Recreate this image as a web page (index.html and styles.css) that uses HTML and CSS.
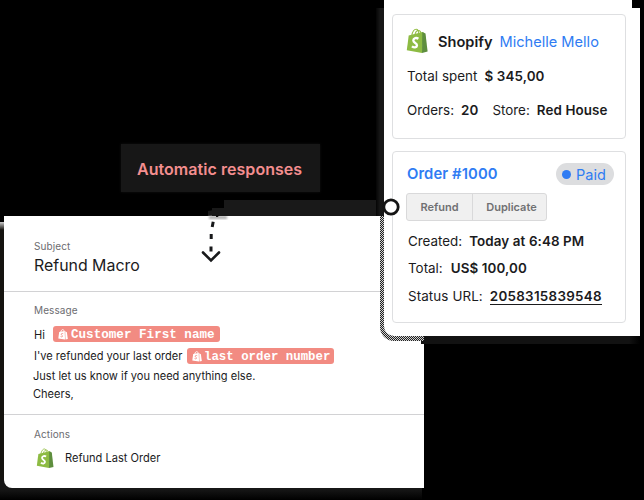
FILE: index.html
```html
<!DOCTYPE html>
<html lang="en">
<head>
<meta charset="utf-8">
<title>Automatic responses</title>
<link rel="stylesheet" href="styles.css">
</head>
<body>
<svg class="defs" width="0" height="0" aria-hidden="true">
  <symbol id="bag" viewBox="0 0 22 25">
    <path d="M5.8 7.5C6.5 3.5 8.5 1.2 10.2 1.2c2 0 2.6 2.8 2.6 5.3M9 6.5C9.600 3.500 11.500 2.300 13 2.500c1.500.3 2 2 2.200 3.500" fill="none" stroke="#95bf47" stroke-width="1.100"/>
    <path d="M2.700 7.600 16.300 4l1.400.4L16 25 .8 22.200z" fill="#8dbb43"/>
    <path d="m16.300 4 3.200 1.600L21.600 23.600 16 25z" fill="#5e8e3e"/>
    <path d="M12.400 10.700C10.500 9.500 7.400 9.900 7.300 12.300c-.1 2.600 4 2.700 3.700 5.200-.3 2.300-3.100 2.300-5.100.8" fill="none" stroke="#fff" stroke-width="2.300"/>
  </symbol>
  <symbol id="bag-mono" viewBox="0 0 10 11">
    <path d="M2.800 3.200C3 1.300 4 .6 4.800.6s1.300.8 1.400 2" fill="none" stroke="#fff" stroke-width=".9"/>
    <path d="M1.200 3 6.700 2.100 7 10.600.3 9.500z" fill="#fff"/>
    <path d="m7.200 2.200 1.700 1 .9 6.700-2.300.7z" fill="#fff"/>
    <path d="M5.200 4.700c-1-.5-2-.2-2 .6 0 .9 1.500 1 1.300 1.900-.1.800-1.100.8-1.900.3" fill="none" stroke="#f28b82" stroke-width=".9"/>
  </symbol>
</svg>
<main class="stage">
  <div class="tag">Automatic responses</div>
  <div class="link-shade"></div>
  <div class="macro-edge"></div>
  <div class="macro-shade"></div>

  <section class="macro">
    <div class="block subject">
      <div class="label">Subject</div>
      <div class="title">Refund Macro</div>
    </div>
    <div class="block message">
      <div class="label">Message</div>
      <div class="line line-hi"><span class="hi">Hi</span><span class="pill pill-name"><svg class="mono-bag"><use href="#bag-mono"/></svg><span>Customer First name</span></span></div>
      <div class="line line-refund"><span class="refunded">I've refunded your last order</span><span class="pill pill-order"><svg class="mono-bag"><use href="#bag-mono"/></svg><span>last order number</span></span></div>
      <div class="line line-know"><span>Just let us know if you need anything else.</span></div>
      <div class="line line-bye"><span>Cheers,</span></div>
    </div>
    <div class="block actions">
      <div class="label">Actions</div>
      <div class="action"><svg class="bag-small"><use href="#bag"/></svg><span>Refund Last Order</span></div>
    </div>
  </section>

  <div class="side-shade"></div>
  <div class="bottom-shade"></div>
  <div class="dither"></div>
  <section class="customer">
    <div class="card summary">
      <div class="row brand"><svg class="bag-large"><use href="#bag"/></svg><b>Shopify</b><span class="name">Michelle Mello</span></div>
      <div class="row spent"><span>Total spent</span><b>$ 345,00</b></div>
      <div class="row orders"><span>Orders:</span><b>20</b><span class="store">Store:</span><b class="house">Red House</b></div>
    </div>
    <div class="card order">
      <div class="row head"><b class="number">Order #1000</b><span class="paid"><i></i><span>Paid</span></span></div>
      <div class="buttons"><span class="btn refund">Refund</span><span class="btn duplicate">Duplicate</span></div>
      <div class="row created"><span>Created:</span><b>Today at 6:48 PM</b></div>
      <div class="row total"><span>Total:</span><b>US$ 100,00</b></div>
      <div class="row status"><span>Status URL:</span><b class="url">2058315839548</b></div>
    </div>
  </section>
  <div class="notch"></div>

  <svg class="connector" width="220" height="80" viewBox="0 0 220 80">
    <defs><filter id="soft"><feGaussianBlur stdDeviation="1.200"/></filter></defs>
    <path d="M9 26h18v3H9z" fill="#aaa" filter="url(#soft)"/>
    <path d="M12 18h18v8H12z" fill="#191919"/>
    <path d="M16 25h3l-1 2h-2z" fill="#111"/>
    <path d="M13.200 31.800 12.200 37M11.200 44v5M11 56.500v5" fill="none" stroke="#18191b" stroke-width="3"/>
    <path d="m3 62.500 8 8 8-8" fill="none" stroke="#18191b" stroke-width="2.600" stroke-linecap="round" stroke-linejoin="miter"/>
    <circle cx="191" cy="17" r="7.200" fill="#fff" stroke="#141414" stroke-width="2.800"/>
  </svg>
</main>
</body>
</html>
```
FILE: styles.css
```css
* { box-sizing: border-box; }
body { margin: 0; background: #000; font-family: Inter, "Liberation Sans", sans-serif; color: #1b1b1d; }
.defs { position: absolute; }
.stage { position: relative; width: 644px; height: 500px; overflow: hidden; background: #000; }
.row, .line, .action, .label, .title { display: flex; align-items: center; white-space: nowrap; }
b { font-weight: 600; }

.tag { position: absolute; left: 121px; top: 144px; width: 199px; height: 48px; padding-left: 16px; background: #171717; box-shadow: 0 0 3px #111; color: #f48e8f; font-size: 16px; font-weight: 600; letter-spacing: .05px; line-height: 50px; white-space: nowrap; }
.link-shade { position: absolute; left: 208px; top: 200px; width: 176px; height: 16px; background: #191919; clip-path: polygon(16px 0, 100% 0, 100% 100%, 0 100%, 0 11px, 16px 8px); }
.macro-edge { position: absolute; left: 0; top: 222px; width: 4px; height: 278px; background: linear-gradient(#ccc, #15130f 8px); }
.macro-shade { position: absolute; left: 0; top: 480px; width: 422px; height: 20px; background: linear-gradient(#171717 45%, #000); }

.macro { position: absolute; left: 4px; top: 216px; width: 420px; height: 272px; background: #fff; border-radius: 0 0 0 8px; }
.block { padding-left: 30px; }
.subject { height: 76px; padding-top: 22px; border-bottom: 1px solid #d2d2d4; }
.message { height: 123px; padding-top: 10px; border-bottom: 1px solid #d2d2d4; }
.actions { padding-top: 11px; }
.label { height: 16px; font-size: 10px; color: #6c6c70; letter-spacing: .1px; }
.title { height: 22px; font-size: 15.900px; }
.line { font-size: 11.070px; }
.line-hi { height: 18px; margin-top: 7px; }
.hi { width: 19px; padding-top: 1px; }
.pill { display: flex; align-items: center; height: 16px; padding-left: 5px; border-radius: 3px; background: #f28b82; color: #fff; font: bold 12.600px "Liberation Mono", monospace; }
.pill span { padding-top: 2px; }
.pill-name { width: 167px; }
.pill-order { width: 147px; margin-left: 5px; font-size: 12.400px; }
.mono-bag { width: 10px; height: 11px; margin-right: 3px; flex: none; }
.pill-order .mono-bag { margin-right: 2px; }
.line-refund { height: 18px; margin-top: 4px; }
.refunded { width: 148px; }
.line-know { height: 18px; margin-top: 2px; margin-left: -1px; }
.line-bye { height: 18px; margin-left: -1px; }
.action { height: 22px; margin-top: 5px; padding-left: 2px; font-size: 11.070px; }
.bag-small { width: 18px; height: 20px; margin-right: 11px; }

.side-shade { position: absolute; left: 376px; top: 8px; width: 8px; height: 208px; background: linear-gradient(90deg, #050505, #171717 50%); }
.bottom-shade { position: absolute; left: 421px; top: 336px; width: 219px; height: 8px; background: linear-gradient(90deg, #121212 95%, #000); }
.dither { position: absolute; left: 380px; top: 216px; width: 44px; height: 125px; border-radius: 0 0 0 14px; background: repeating-conic-gradient(#222 0 25%, #d0d0d0 0 50%) 0 0 / 2px 2px; }
.customer { position: absolute; left: 384px; top: 0; width: 256px; height: 336px; padding: 14px 14px 0 8px; background: #fff; border-radius: 0 0 0 10px; }
.notch { position: absolute; left: 632px; top: 0; width: 12px; height: 8px; background: #000; }
.card { border: 1px solid #dedfe1; border-radius: 4px; font-size: 13.400px; }
.card .row:not(.brand) b { letter-spacing: .1px; }
.summary { height: 125px; padding: 13px 0 0 13px; }
.order { height: 172px; margin-top: 12px; padding: 10px 0 0 13px; }
.brand { height: 28px; font-size: 14.600px; }
.bag-large { width: 22px; height: 25px; margin: -4px 10px 0 0; }
.name { margin-left: 7px; color: #2f7cf3; }
.spent { height: 22px; margin-top: 9px; padding-left: 1px; letter-spacing: .05px; }
.spent b { margin-left: 7px; }
.orders { height: 22px; margin-top: 12px; padding-left: 1px; }
.orders b { margin-left: 7px; }
.store { margin-left: 14px; }
.head { height: 24px; padding-left: 1px; }
.number { width: 149px; color: #2f7cf3; font-size: 14.800px; }
.paid { display: flex; align-items: center; width: 58px; height: 22px; padding-left: 6px; border-radius: 11px; background: #dcdddf; color: #2f7cf3; font-size: 14.500px; }
.paid i { width: 9px; height: 9px; margin-right: 5px; border-radius: 50%; background: #2f7cf3; }
.buttons { display: flex; width: 141px; height: 28px; margin-top: 7px; border: 1px solid #d9d9da; border-radius: 3px; background: #f0f0f0; color: #707073; font-size: 11px; font-weight: 600; line-height: 26px; }
.btn { text-align: center; }
.refund { width: 66px; border-right: 1px solid #d9d9da; }
.duplicate { width: 73px; padding-left: 4px; }
.created, .total, .status { height: 22px; padding-left: 2px; }
.created { margin-top: 9px; }
.total { margin-top: 5px; }
.status { margin-top: 6px; letter-spacing: .1px; }
.created b { margin-left: 7px; }
.total b { margin-left: 8px; }
.card .row.status .url { margin-left: 7px; line-height: 16px; letter-spacing: .28px; border-bottom: 1px solid #1b1b1d; }
.connector { position: absolute; left: 200px; top: 190px; }
```
